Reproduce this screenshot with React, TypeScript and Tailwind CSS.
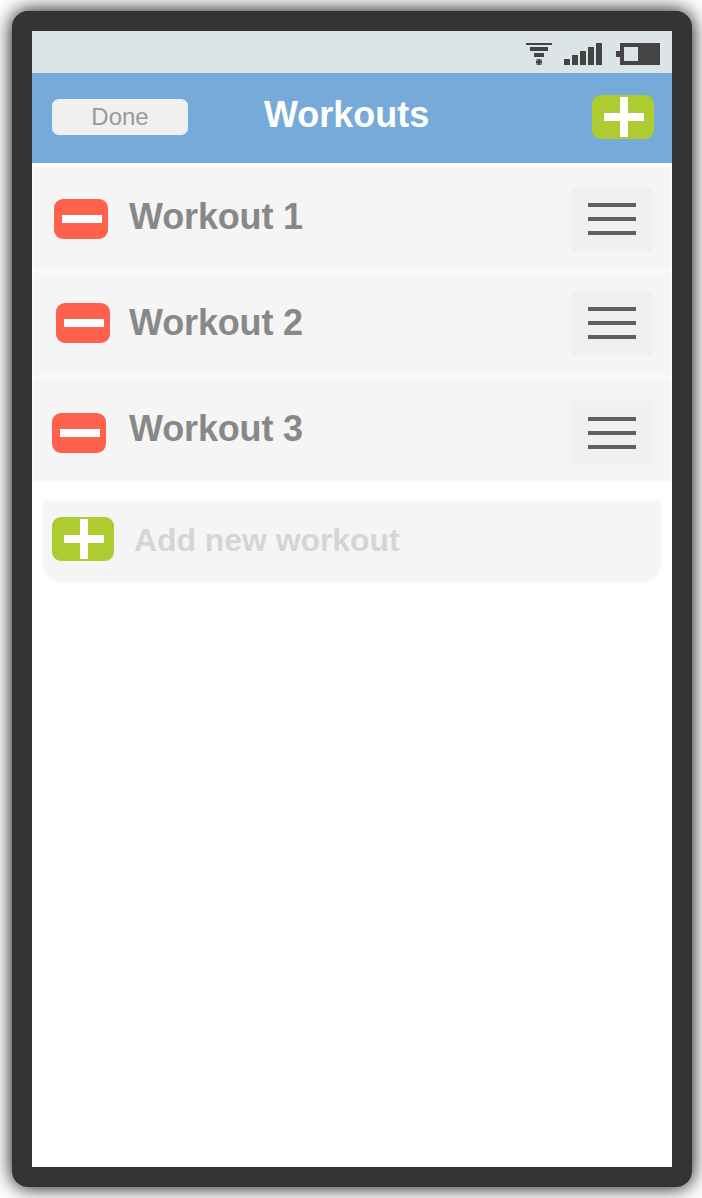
const FONT = "font-['Liberation_Sans',Arial,sans-serif]";

function AddIcon() {
  return (
    <svg width="62" height="44" viewBox="0 0 62 44" className="block shrink-0">
      <rect width="62" height="44" rx="9" fill="#aecb2f" />
      <path d="M28 2h8v16h16v8H36v16h-8V26H12v-8h16z" fill="#fff" />
    </svg>
  );
}

function RemoveIcon() {
  return (
    <svg width="54" height="40" viewBox="0 0 54 40" className="block">
      <rect width="54" height="40" rx="9" fill="#ff614d" />
      <rect x="8" y="16" width="40" height="8" fill="#fff" />
    </svg>
  );
}

function StatusIcons() {
  return (
    <svg width="136" height="26" viewBox="0 0 136 26" className="block" fill="#444444" shapeRendering="crispEdges">
      <path d="M0 1h26v2H0zM4 5h18v4H4zM8 11h10v4H8z" />
      <path d="M10 17h6v6h-6z" opacity="0.55" />
      <path d="M12 17h2v6h-2zM10 19h6v2h-6z" />
      <path d="M38 17h6v6h-6zM46 13h6v10h-6zM54 9h6v14h-6zM62 5h6v18h-6zM70 1h6v22h-6z" />
      <path fillRule="evenodd" d="M94 1h40v22H94v-8h-4V9h4zM98 5v14h14V5z" />
    </svg>
  );
}

function DragHandle() {
  return (
    <div className="flex h-16 w-20 flex-col items-center justify-center gap-2.5 bg-[#f0f0f0]">
      <div className="h-1 w-12 bg-[#606060]" />
      <div className="h-1 w-12 bg-[#606060]" />
      <div className="h-1 w-12 bg-[#606060]" />
    </div>
  );
}

type Workout = { name: string; remove: string; handle: string };

const workouts: Workout[] = [
  { name: "Workout 1", remove: "pl-5 pt-8", handle: "pt-5" },
  { name: "Workout 2", remove: "pl-[22px] pt-[30px]", handle: "pt-[18px]" },
  { name: "Workout 3", remove: "pl-[18px] pt-[34px]", handle: "pt-[22px]" },
];

export default function App() {
  return (
    <div className={`h-[1198px] w-[702px] overflow-hidden bg-white pl-3 pt-[11px] ${FONT}`}>
      <div className="h-[1176px] w-[680px] rounded-2xl bg-[#333333] p-5 shadow-[0_0_20px_0_rgba(0,0,0,1)]">
        <div className="h-full bg-white">
          <div className="flex h-[42px] justify-end bg-[#dce4e7] pr-[10px] pt-[11px]">
            <StatusIcons />
          </div>
          <header className="grid h-[90px] grid-cols-[136px_1fr_62px] bg-[#76aad8] pl-5 pr-[18px]">
            <button className="mt-[26px] h-9 rounded-[7px] bg-[#f0f0f0] text-2xl leading-9 text-[#999999]">Done</button>
            <h1 className="pl-[76px] pt-6 text-4xl leading-9 font-bold text-white">Workouts</h1>
            <div className="pt-[22px]"><AddIcon /></div>
          </header>
          <ul className="pt-0.5">
            {workouts.map((w) => (
              <li key={w.name} className="grid h-[106px] grid-cols-[95px_1fr_80px] border-2 border-[#fbfbfb] bg-[#f5f5f5] pr-[18px]">
                <div className={w.remove}><RemoveIcon /></div>
                <div className="pt-8 text-4xl leading-9 font-bold tracking-[-0.15px] whitespace-nowrap text-[#888888]">{w.name}</div>
                <div className={w.handle}><DragHandle /></div>
              </li>
            ))}
          </ul>
          <div className="mx-2.5 mt-4 flex h-[85px] gap-5 rounded-b-[20px] border-2 border-[#fbfbfb] bg-[#f5f5f5] pl-2 pt-4">
            <AddIcon />
            <div className="pt-[7px] text-[32px] leading-8 font-bold tracking-[-0.07px] text-[#d5d5d5]">Add new workout</div>
          </div>
        </div>
      </div>
    </div>
  );
}
